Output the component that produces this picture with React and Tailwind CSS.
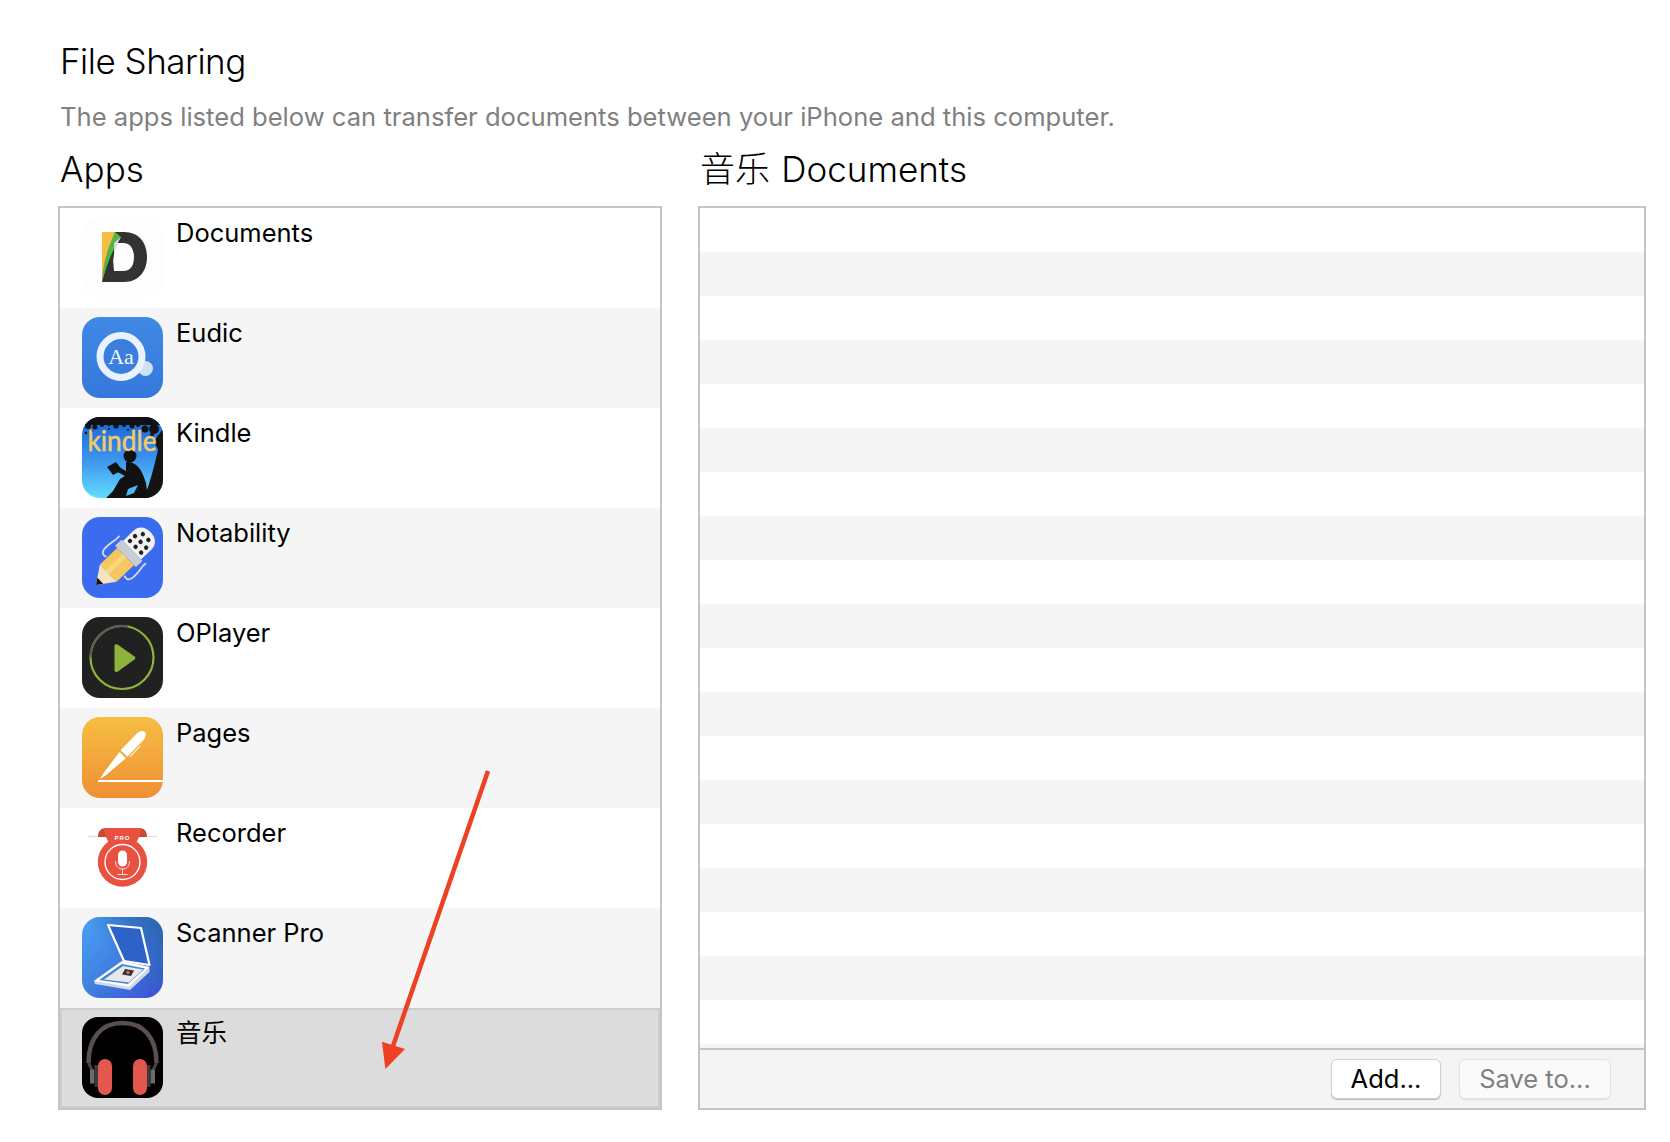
const sans = { fontFamily: '"Inter", "Noto Sans CJK SC", sans-serif' };

function Shell({ children, className = "" }) {
  return (
    <svg viewBox="0 0 81 81" className={"block w-[81px] h-[81px] shrink-0 " + className}>
      {children}
    </svg>
  );
}

function DocumentsIcon() {
  return (
    <Shell>
      <rect width="81" height="81" rx="18" fill="#fdfdfd" />
      <path fillRule="evenodd" d="M20 15H42C58 15 65 27 65 40C65 54 57 65 42 65H20ZM32 26V54H41C49 54 52 48 52 40C52 33 49 26 41 26Z" fill="#333" />
      <path d="M20 15H33L20 65Z" fill="#f6bd45" />
      <path d="M33 15L39 20C32 30 25 46 20 65C21 46 26 30 33 15Z" fill="#55b544" />
      <path d="M39 20C34 28 32 36 31 44L32 54V26Z" fill="#d8d8d8" />
    </Shell>
  );
}

function EudicIcon() {
  return (
    <Shell>
      <defs>
        <linearGradient id="eu" x1="0" y1="0" x2="0" y2="1">
          <stop offset="0" stopColor="#4189e6" />
          <stop offset="1" stopColor="#3478db" />
        </linearGradient>
      </defs>
      <rect width="81" height="81" rx="18" fill="url(#eu)" />
      <circle cx="63.500" cy="51.500" r="7.500" fill="#cfe2f8" />
      <circle cx="39" cy="39.500" r="21" fill="#3a7fe0" stroke="#eaf3fd" strokeWidth="7" />
      <text x="39" y="46.500" textAnchor="middle" fontSize="22" fill="#f4f8fe" style={{ fontFamily: '"Liberation Serif", serif' }}>Aa</text>
    </Shell>
  );
}

function KindleIcon() {
  const leaves = [
    [6, 9, 3], [13, 10, 2.5], [20, 8, 2], [27, 7, 2], [34, 9, 2.5], [42, 8, 2], [50, 9, 2.5],
    [56, 8, 2], [63, 12, 3.5], [72, 12, 5], [4, 16, 1.2], [10, 14, 1], [27, 12, 1], [46, 13, 1], [58, 15, 1.2], [70, 18, 2],
  ];
  return (
    <Shell>
      <defs>
        <linearGradient id="ki" x1="0" y1="0" x2="0" y2="1">
          <stop offset="0" stopColor="#1561d8" />
          <stop offset="0.55" stopColor="#3f97ee" />
          <stop offset="1" stopColor="#62dcff" />
        </linearGradient>
        <clipPath id="kic"><rect width="81" height="81" rx="18" /></clipPath>
      </defs>
      <g clipPath="url(#kic)">
        <rect width="81" height="81" fill="url(#ki)" />
        <rect width="81" height="8" fill="#111" />
        {leaves.map(([x, y, r], i) => (
          <circle key={i} cx={x} cy={y} r={r} fill="#111" />
        ))}
        <path d="M81 12V81H62C68 66 72 50 76 33L72 24L81 12Z" fill="#141414" />
        <circle cx="48" cy="39" r="6.500" fill="#111" />
        <path d="M44 45C54 44 60 52 64 66L66 81H24L31 74L38 62L43 59L30 52L32 47L44 54Z" fill="#111" />
        <path d="M25 50L34 45L40 53L31 58Z" fill="#111" />
        <path d="M46 72L56 68L52 76L44 79Z" fill="#4db7f4" />
      </g>
      <text x="40" y="34" textAnchor="middle" fontSize="29" fill="#f3cb68" stroke="#f3cb68" strokeWidth="0.500" style={{ fontFamily: '"Lato", sans-serif' }} textLength="69" lengthAdjust="spacingAndGlyphs">kindle</text>
    </Shell>
  );
}

function NotabilityIcon() {
  return (
    <Shell>
      <rect width="81" height="81" rx="18" fill="#3b6cf0" />
      <g transform="translate(14 68) rotate(-44)">
        <path d="M46 -19C30 -22 24 -20 27 -13" fill="none" stroke="#d5dbea" strokeWidth="1.800" />
        <path d="M46 19C30 22 24 20 27 13" fill="none" stroke="#d5dbea" strokeWidth="1.800" />
        <path d="M46 -19L51 -19M46 19L51 19" fill="none" stroke="#d5dbea" strokeWidth="1.800" />
        <path d="M50 -13H65C72 -13 76 -7 76 0C76 7 72 13 65 13H50Z" fill="#f2f2f2" />
        <g fill="#222">
          <circle cx="55" cy="-8" r="2.200" /><circle cx="55" cy="0" r="2.200" /><circle cx="55" cy="8" r="2.200" />
          <circle cx="62" cy="-8" r="2.200" /><circle cx="62" cy="0" r="2.200" /><circle cx="62" cy="8" r="2.200" />
          <circle cx="69" cy="-4" r="2.200" /><circle cx="69" cy="4" r="2.200" />
        </g>
        <rect x="41" y="-15" width="9" height="30" rx="1" fill="#c9ccd2" />
        <path d="M17 -12H41V12H17Z" fill="#f6c65f" />
        <path d="M17 -4H41V1H17Z" fill="#fbd77e" />
        <path d="M0 0L17 -12V12Z" fill="#f5e2c0" />
        <path d="M0 0L6 -4.200V4.200Z" fill="#161616" />
      </g>
    </Shell>
  );
}

function OPlayerIcon() {
  return (
    <Shell>
      <rect width="81" height="81" rx="18" fill="#212121" />
      <circle cx="40" cy="40.500" r="31.500" fill="none" stroke="#8fb33a" strokeWidth="2.200" />
      <path d="M8.500 40.500A31.500 31.500 0 0 1 46 9.600" fill="none" stroke="#5b5b5b" strokeWidth="2.200" />
      <path d="M32.500 29C32.500 27.500 34 26.600 35.500 27.600L52.500 39.500C53.700 40.500 53.700 41.500 52.500 42.500L35.500 54.700C34 55.600 32.500 54.700 32.500 53Z" fill="#8fb33a" />
    </Shell>
  );
}

function PagesIcon() {
  return (
    <Shell>
      <defs>
        <linearGradient id="pg" x1="0" y1="0" x2="0" y2="1">
          <stop offset="0" stopColor="#f6be43" />
          <stop offset="1" stopColor="#ef8f34" />
        </linearGradient>
      </defs>
      <rect width="81" height="81" rx="18" fill="url(#pg)" />
      <rect x="16" y="63" width="65" height="2" fill="#fff" />
      <g transform="translate(18 62) rotate(-46)">
        <path d="M0 0L6 -1.500L33 -4.800V4.200L6 1.500Z" fill="#fff" />
        <path d="M35 -5.200H58C62 -5 65 -3 65 -0.500C65 2 62 4 58 4.200H35Z" fill="#fff" />
        <path d="M37 6H52" stroke="#fff" strokeWidth="1" />
      </g>
    </Shell>
  );
}

function RecorderIcon() {
  return (
    <Shell>
      <rect x="6" y="18.800" width="69" height="1.300" fill="#e2e2e2" />
      <path d="M16 20C16 14 19 11 24 11H57C62 11 65 14 65 20Z" fill="#c9473b" />
      <path d="M22 11H59C59 17 57 20 54 26H27C24 20 22 17 22 11Z" fill="#e8503f" />
      <circle cx="40.500" cy="45" r="24.700" fill="#e8503f" />
      <circle cx="40.500" cy="45" r="17.500" fill="none" stroke="#fff" strokeWidth="1.400" />
      <text x="40.500" y="22.500" textAnchor="middle" fontSize="6" fontWeight="700" letterSpacing="1" fill="#fff" style={{ fontFamily: '"Liberation Sans", sans-serif' }}>PRO</text>
      <rect x="36" y="33.500" width="9" height="16" rx="4.500" fill="#fff" />
      <path d="M33.500 44C33.500 49 36 52 40.500 52C45 52 47.500 49 47.500 44" fill="none" stroke="#fff" strokeWidth="0.800" />
      <path d="M40.500 52V57.500M35.500 57.500H45.500" stroke="#fff" strokeWidth="0.800" fill="none" />
    </Shell>
  );
}

function ScannerIcon() {
  return (
    <Shell>
      <defs>
        <linearGradient id="sc" x1="0" y1="0" x2="1" y2="1">
          <stop offset="0" stopColor="#4aa2f6" />
          <stop offset="0.5" stopColor="#3f7fdf" />
          <stop offset="1" stopColor="#3b4fd4" />
        </linearGradient>
        <linearGradient id="sc2" x1="1" y1="0" x2="0.4" y2="0.5">
          <stop offset="0" stopColor="#2a62ad" />
          <stop offset="1" stopColor="#2a62ad" stopOpacity="0" />
        </linearGradient>
      </defs>
      <rect width="81" height="81" rx="18" fill="url(#sc)" />
      <rect width="81" height="81" rx="18" fill="url(#sc2)" />
      <path d="M26 8L59 11L67.500 48L42 44Z" fill="#2e62c9" stroke="#fff" strokeWidth="2.200" strokeLinejoin="round" />
      <path d="M12 64L40 44L67.500 50V55L48 73L13 67Z" fill="#cfd8e6" />
      <path d="M12 64L40 44L67.500 50L47 70Z" fill="#fff" />
      <path d="M17 63L40 47L63 51.500L46 67Z" fill="#3c87d8" />
      <path d="M22 62.500L41 49L61 52.500L47 65.500Z" fill="#e8e8e8" />
      <path d="M43 52L52 53.500L49 59L40 57.500Z" fill="#333" />
      <circle cx="46" cy="55.500" r="1.800" fill="#c8607a" />
    </Shell>
  );
}

function MusicIcon() {
  return (
    <Shell>
      <rect width="81" height="81" rx="16" fill="#000" />
      <path d="M6.500 46C6.500 20 20 6 40.500 6C61 6 74.500 20 74.500 46" fill="none" stroke="#5a4f4f" strokeWidth="4.500" />
      <path d="M6.500 46L10 53M74.500 46L71 53" stroke="#4a4242" strokeWidth="3" />
      <rect x="8" y="52.500" width="4.500" height="14" fill="#6f6a6a" />
      <rect x="68.500" y="52.500" width="4.500" height="14" fill="#6f6a6a" />
      <rect x="12.500" y="48" width="3.500" height="22" fill="#3a3a3a" />
      <rect x="65" y="48" width="3.500" height="22" fill="#3a3a3a" />
      <rect x="16" y="42" width="14" height="36" rx="7" fill="#e2584f" />
      <rect x="51" y="42" width="14" height="36" rx="7" fill="#e2584f" />
    </Shell>
  );
}

const apps = [
  ["Documents", DocumentsIcon],
  ["Eudic", EudicIcon],
  ["Kindle", KindleIcon],
  ["Notability", NotabilityIcon],
  ["OPlayer", OPlayerIcon],
  ["Pages", PagesIcon],
  ["Recorder", RecorderIcon],
  ["Scanner Pro", ScannerIcon],
];

function Row({ name, Icon, striped }) {
  return (
    <div className={"flex h-[100px] pl-[22px] pt-[9px] gap-[13px] " + (striped ? "bg-[#f5f5f5]" : "bg-white")}>
      <Icon />
      <span className="text-[25.5px] leading-[34px] text-black -mt-[1px]">{name}</span>
    </div>
  );
}

export default function App() {
  const stripes = Array.from({ length: 20 }, (_, i) => i);
  return (
    <div className="relative min-h-screen bg-white pl-[58px] pr-[24px] pt-[39px] pb-[32px]" style={sans}>
      <h1 className="pl-[2px] h-[44px] text-[35px] leading-[44px] font-light tracking-[-0.5px] text-black">File Sharing</h1>
      <p className="pl-[2px] mt-[19px] h-[30px] text-[25.6px] leading-[30px] text-[#808080]">
        The apps listed below can transfer documents between your iPhone and this computer.
      </p>
      <div className="flex gap-[36px] mt-[15px]">
        <section className="w-[604px] shrink-0 flex flex-col">
          <h2 className="pl-[2px] h-[44px] text-[35px] leading-[44px] font-light text-black">Apps</h2>
          <div className="mt-[15px] border-2 border-[#c4c4c4] bg-white flex flex-col">
            {apps.map(([name, Icon], i) => (
              <Row key={name} name={name} Icon={Icon} striped={i % 2 === 1} />
            ))}
            <div className="flex h-[100px] pl-[20px] pt-[7px] gap-[13px] bg-[#dcdcdc] border-2 border-[#cdcdcd]">
              <MusicIcon />
              <span className="text-[25.5px] leading-[34px] text-black -mt-[1px]">音乐</span>
            </div>
          </div>
        </section>
        <section className="flex-1 flex flex-col">
          <h2 className="pl-[2px] h-[44px] text-[35px] leading-[44px] font-light [word-spacing:1.5px] text-black">音乐 Documents</h2>
          <div className="mt-[15px] border-2 border-[#c4c4c4] flex flex-col h-[904px]">
            <div className="h-[840px] overflow-hidden">
              {stripes.map((i) => (
                <div key={i} className={"h-11 " + (i % 2 === 1 ? "bg-[#f5f5f5]" : "bg-white")} />
              ))}
            </div>
            <div className="flex-1 border-t-2 border-[#c4c4c4] bg-[#f4f4f4] flex items-center justify-end gap-[18px] pr-[33px]">
              <button className="w-[110px] h-[40px] rounded-[6px] bg-white border border-[#d0d0d0] shadow-[0_1px_1px_rgba(0,0,0,0.25)] text-[25.5px] leading-[38px] text-black">Add...</button>
              <button className="w-[152px] h-[40px] rounded-[6px] bg-[#fafafa] border border-[#e2e2e2] shadow-[0_1px_1px_rgba(0,0,0,0.08)] text-[25.5px] leading-[38px] text-[#808080]">Save to...</button>
            </div>
          </div>
        </section>
      </div>
      <svg className="absolute left-0 top-0 pointer-events-none" width="1670" height="1142" viewBox="0 0 1670 1142">
        <path d="M488 771L393 1046" stroke="#ee4023" strokeWidth="4.500" fill="none" />
        <path d="M382 1041.700L405 1049L385.400 1069Z" fill="#ee4023" />
      </svg>
    </div>
  );
}
